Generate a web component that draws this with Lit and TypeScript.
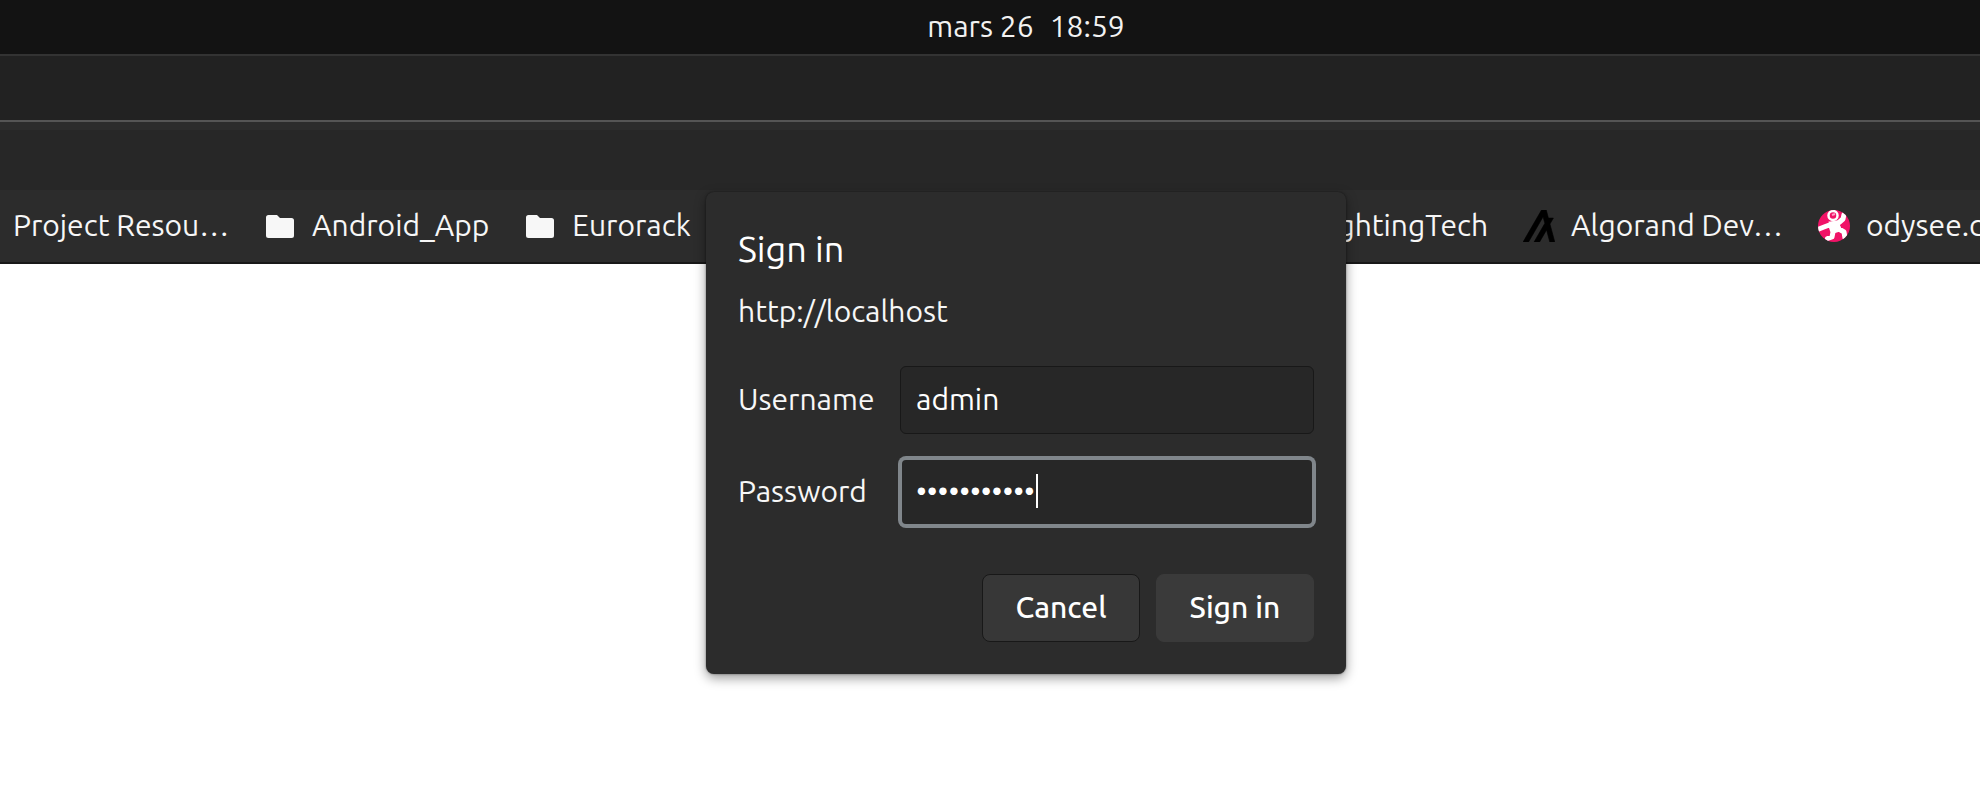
import { LitElement, html, css } from "lit";
import { customElement } from "lit/decorators.js";

const folder = html`<svg class="icon" viewBox="0 0 32 32" aria-hidden="true">
  <path fill="#f7f7f7" d="M4.500 5H13l3 3h11.500a2.500 2.500 0 0 1 2.500 2.500v15a2.500 2.500 0 0 1-2.500 2.500h-23A2.500 2.500 0 0 1 2 25.500v-18A2.500 2.500 0 0 1 4.500 5z" />
</svg>`;

const algorand = html`<svg class="icon" viewBox="6 20 78.500 78.500" aria-hidden="true">
  <path fill="#000" stroke="#000" stroke-width="1.500" d="M19.600 98.400L55.300 36.700L59.600 52.800L33.200 98.400H46.700L63.800 68.800L71.800 98.400H83.900L72.100 54.400L80.500 39.900H68.300L63.100 20.300H51.400L6.200 98.400z" />
</svg>`;

const odysee = html`<svg class="icon" viewBox="0 0 32 32" aria-hidden="true">
  <defs><clipPath id="disc"><circle cx="16" cy="16" r="16" /></clipPath></defs>
  <g clip-path="url(#disc)">
    <rect width="32" height="32" fill="#f01367" />
    <path fill="none" stroke="#fff" stroke-width="5" stroke-linecap="round" stroke-linejoin="round"
      d="M1 19 L6 17 L14 14 L21 12.500 L25 9 L26 4.500 M13 16 L15 22 L14 27 L9.500 28.500 M19 15 L21 19 L26 22 L27 28" />
    <path fill="#fff" d="M10.500 11.500h10.500l2.500 9.500-9.500 3z" />
    <circle cx="15" cy="5.500" r="4.500" fill="#f01367" stroke="#fff" stroke-width="2.500" />
    <path stroke="#ff9cc4" stroke-width="2" d="M14 5l3-1" />
  </g>
</svg>`;

const mark = (label: string, icon: unknown = "", extra = "") => html`
  <a class="bookmark ${extra}" href="#">${icon}<span class="label">${label}</span></a>
`;

@customElement("app-root")
export class AppRoot extends LitElement {
  static styles = css`
    :host {
      display: block;
      min-height: 100vh;
      position: relative;
      overflow: hidden;
      background: #fff;
      color: #f7f7f7;
      font: 400 30px/36px Ubuntu, "Noto Sans", sans-serif;
    }
    * { box-sizing: border-box; }
    .clock {
      display: flex;
      justify-content: center;
      align-items: center;
      gap: 16px;
      height: 54px;
      padding: 0 0 2px 72px;
      background: #131313;
      color: #f2f2f2;
    }
    .tabs {
      height: 68px;
      background: #222;
      border-top: 2px solid #333;
      border-bottom: 2px solid #555;
    }
    .toolbar {
      height: 68px;
      background: #272727;
      border-top: 8px solid #2c2c2c;
    }
    .bookmarks {
      display: flex;
      align-items: center;
      gap: 35px;
      height: 74px;
      padding-left: 13px;
      background: #2c2c2c;
      border-bottom: 2px solid #181818;
    }
    .bookmark {
      display: flex;
      flex: none;
      align-items: center;
      gap: 16px;
      color: inherit;
      text-decoration: none;
      white-space: nowrap;
    }
    .label { padding-bottom: 2px; }
    .spacer { flex: 1; }
    .cut { width: 162px; overflow: hidden; }
    .icon { width: 32px; height: 32px; flex: none; display: block; }
    .dialog {
      position: absolute;
      top: 192px;
      left: calc(50% - 284px);
      width: 640px;
      padding: 32px;
      border-radius: 8px;
      background: #2c2c2c;
      box-shadow: 0 0 2px rgba(0, 0, 0, 0.5), 0 4px 12px rgba(0, 0, 0, 0.4);
    }
    h1 {
      margin: 0;
      padding-top: 4px;
      font-size: 36px;
      font-weight: 400;
      line-height: 42px;
      color: #fff;
    }
    .origin { margin: 0; padding: 23px 0 37px; }
    .fields {
      display: grid;
      grid-template-columns: 162px 1fr;
      row-gap: 24px;
      align-items: center;
    }
    label { padding-bottom: 2px; }
    .entry { position: relative; display: flex; }
    input {
      width: 100%;
      height: 68px;
      padding: 0 15px 2px;
      border: 1px solid #181818;
      border-radius: 6px;
      outline: none;
      background: #272727;
      color: #fff;
      font: inherit;
    }
    .focused input {
      padding: 0 14px 2px;
      border: 2px solid #80868b;
      box-shadow: 0 0 0 2px #80868b;
    }
    .caret {
      position: absolute;
      top: 16px;
      left: 136px;
      width: 2px;
      height: 34px;
      background: #fff;
    }
    .actions {
      display: flex;
      justify-content: flex-end;
      gap: 16px;
      padding-top: 48px;
    }
    button {
      width: 158px;
      height: 68px;
      padding: 0 0 2px;
      border: 1px solid #181818;
      border-radius: 8px;
      background: #373737;
      color: #fff;
      font: inherit;
      font-weight: 500;
    }
    .primary { background: #3a3a3a; border-color: #3a3a3a; }
  `;

  render() {
    return html`
      <header class="clock"><span>mars 26</span><time>18:59</time></header>
      <div class="tabs"></div>
      <div class="toolbar"></div>
      <nav class="bookmarks">
        ${mark("Project Resou…")}
        ${mark("Android_App", folder)}
        ${mark("Eurorack", folder)}
        <span class="spacer"></span>
        ${mark("LightingTech")}
        ${mark("Algorand Dev…", algorand)}
        ${mark("odysee.com", odysee, "cut")}
      </nav>
      <form class="dialog" role="dialog" aria-labelledby="title" @submit=${(e: Event) => e.preventDefault()}>
        <h1 id="title">Sign in</h1>
        <p class="origin">http://localhost</p>
        <div class="fields">
          <label for="username">Username</label>
          <div class="entry"><input id="username" type="text" value="admin" /></div>
          <label for="password">Password</label>
          <div class="entry focused">
            <input id="password" type="password" value="hunter2hunt" />
            <span class="caret"></span>
          </div>
        </div>
        <div class="actions">
          <button type="button">Cancel</button>
          <button type="submit" class="primary">Sign in</button>
        </div>
      </form>
    `;
  }
}
